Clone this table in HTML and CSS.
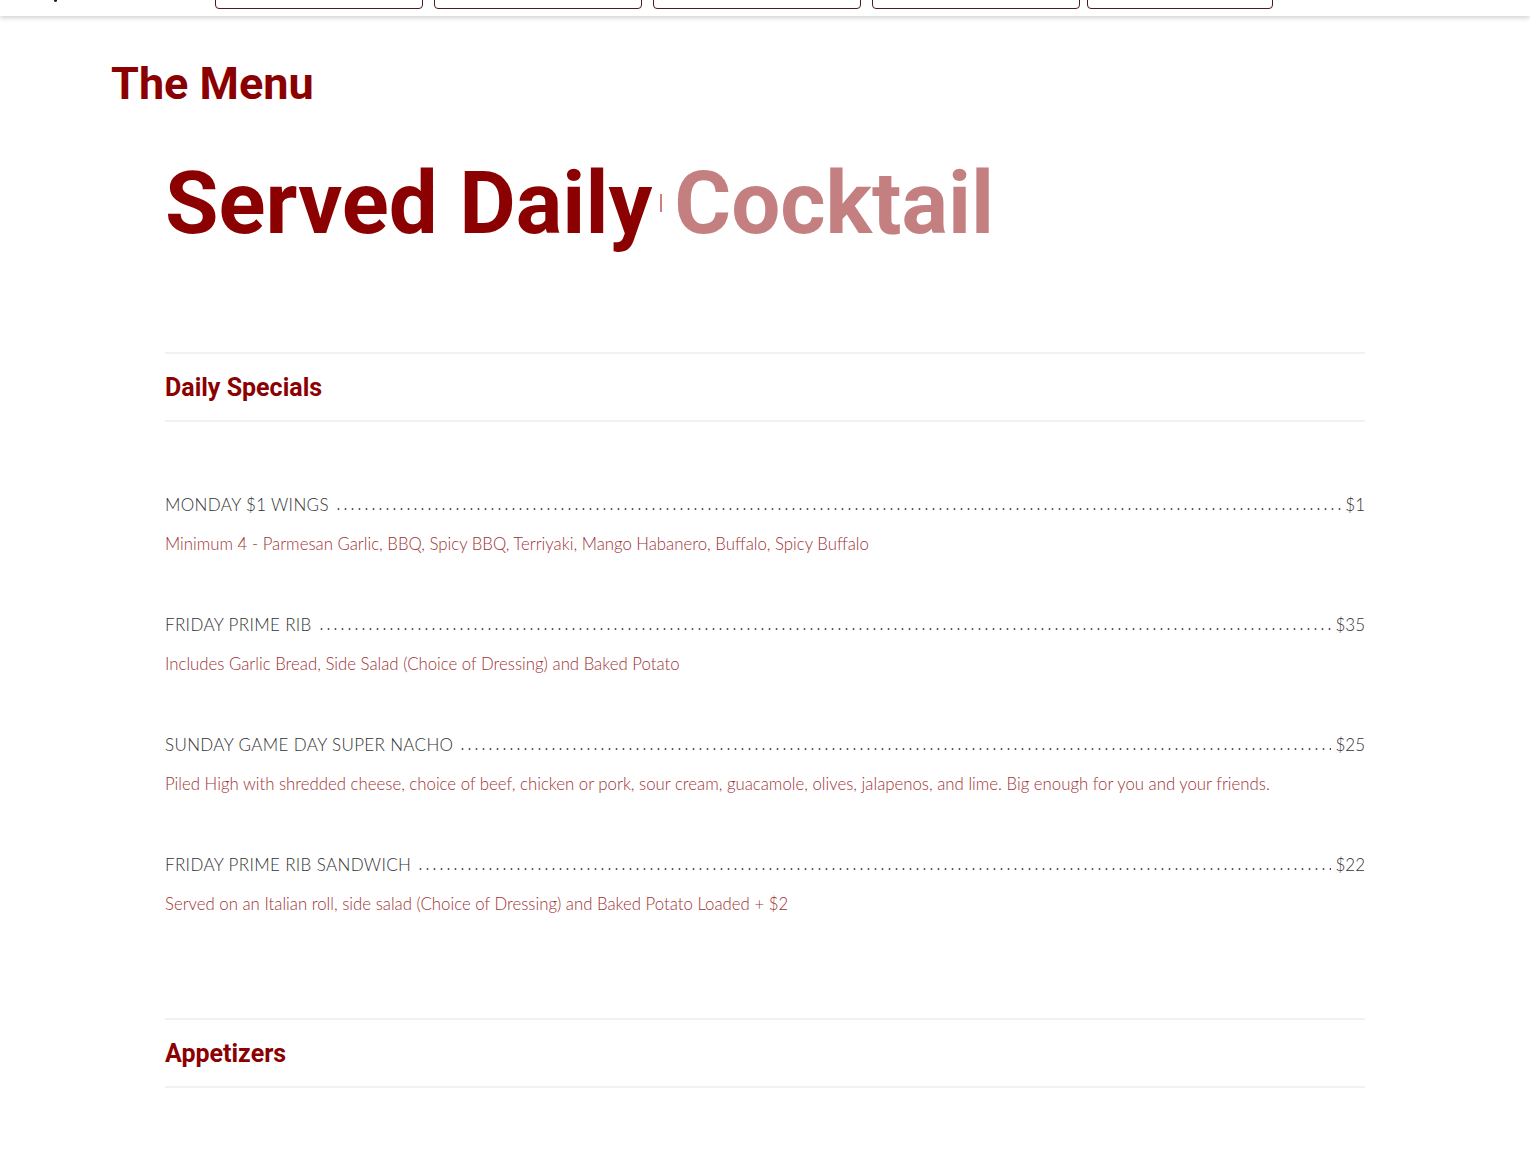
FILE: index.html
```html
<!DOCTYPE html>
<html lang="en">
<head>
    <meta charset="UTF-8">
    <meta name="viewport" content="width=device-width, initial-scale=1.0">
    <title>The Menu</title>
    <link rel="stylesheet" href="styles.css">
</head>
<body>
    <header class="topbar">
        <span class="logo-tip"></span>
        <nav class="nav">
            <a class="nav-btn" href="#" aria-label="Home"></a>
            <a class="nav-btn" href="#" aria-label="Menu"></a>
            <a class="nav-btn" href="#" aria-label="Events"></a>
            <a class="nav-btn" href="#" aria-label="Gallery"></a>
            <a class="nav-btn nav-btn-last" href="#" aria-label="Contact"></a>
        </nav>
    </header>

    <main class="page">
        <h1 class="page-title">The Menu</h1>

        <div class="content">
            <h2 class="hero">Served Daily<span class="caret"></span><span class="hero-faded">Cocktail</span></h2>

            <section class="menu-section">
                <h3 class="section-title">Daily Specials</h3>

                <div class="items">
                    <div class="item">
                        <div class="item-line">
                            <span class="item-name">MONDAY $1 WINGS</span>
                            <span class="leader"></span>
                            <span class="item-price">$1</span>
                        </div>
                        <p class="item-desc">Minimum 4 - Parmesan Garlic, BBQ, Spicy BBQ, Terriyaki, Mango Habanero, Buffalo, Spicy Buffalo</p>
                    </div>

                    <div class="item">
                        <div class="item-line">
                            <span class="item-name">FRIDAY PRIME RIB</span>
                            <span class="leader"></span>
                            <span class="item-price">$35</span>
                        </div>
                        <p class="item-desc">Includes Garlic Bread, Side Salad (Choice of Dressing) and Baked Potato</p>
                    </div>

                    <div class="item">
                        <div class="item-line">
                            <span class="item-name">SUNDAY GAME DAY SUPER NACHO</span>
                            <span class="leader"></span>
                            <span class="item-price">$25</span>
                        </div>
                        <p class="item-desc">Piled High with shredded cheese, choice of beef, chicken or pork, sour cream, guacamole, olives, jalapenos, and lime. Big enough for you and your friends.</p>
                    </div>

                    <div class="item">
                        <div class="item-line">
                            <span class="item-name">FRIDAY PRIME RIB SANDWICH</span>
                            <span class="leader"></span>
                            <span class="item-price">$22</span>
                        </div>
                        <p class="item-desc">Served on an Italian roll, side salad (Choice of Dressing) and Baked Potato Loaded + $2</p>
                    </div>
                </div>
            </section>

            <section class="menu-section">
                <h3 class="section-title">Appetizers</h3>
            </section>
        </div>
    </main>
</body>
</html>
```

FILE: styles.css
```css
body {
    margin: 0;
    font-family: Lato, "Open Sans", sans-serif;
    background: #fff;
    color: #333;
}
.topbar {
    height: 16px;
    overflow: hidden;
    background: #fff;
    box-shadow: 0 2px 5px rgba(0, 0, 0, 0.18);
    display: flex;
    position: relative;
}
.logo-tip {
    position: absolute;
    left: 54px;
    top: 0;
    width: 3px;
    height: 2px;
    background: #222;
    border-radius: 0 0 2px 2px;
}
.nav {
    display: flex;
    margin-left: 215px;
    margin-top: -31px;
    gap: 11px;
}
.nav-btn {
    display: block;
    width: 206px;
    height: 38px;
    border: 1px solid #4a1c1c;
    border-radius: 4px;
}
.nav-btn-last {
    width: 184px;
    margin-left: -4px;
}
.page {
    padding: 0 111px;
}
.page-title {
    margin: 0;
    padding-top: 43px;
    font-family: Roboto, sans-serif;
    font-weight: 700;
    font-size: 45px;
    line-height: 50px;
    color: #8b0000;
}
.content {
    margin: 0 54px;
}
.hero {
    margin: 39px 0 0;
    font-family: Roboto, sans-serif;
    font-weight: 700;
    font-size: 87px;
    line-height: 110px;
    color: #8b0000;
    display: flex;
    align-items: center;
}
.caret {
    display: inline-block;
    width: 2px;
    height: 18px;
    background: #c88080;
    margin: 0 12px 0 8px;
}
.hero-faded {
    color: #c48080;
}
.hero + .menu-section {
    margin-top: 94px;
}
.section-title {
    margin: 0;
    border-top: 2px solid #f2f2f2;
    border-bottom: 2px solid #f2f2f2;
    height: 66px;
    display: flex;
    align-items: center;
    font-family: Roboto, sans-serif;
    font-weight: 700;
    font-size: 25px;
    color: #8b0000;
}
.items {
    padding-top: 70px;
    padding-bottom: 101px;
    display: flex;
    flex-direction: column;
    gap: 55px;
}
.item-line {
    display: flex;
    align-items: baseline;
    font-size: 17px;
    font-weight: 300;
    line-height: 26px;
    color: #333;
}
.item-name {
    letter-spacing: 0.35px;
}
.leader {
    flex: 1;
    height: 6px;
    margin: 0 4px 0 6px;
    background-image: radial-gradient(circle, #555 0.9px, transparent 1.2px);
    background-size: 7px 4px;
    background-repeat: repeat-x;
    background-position: left bottom;
}
.item-desc {
    margin: 13px 0 0;
    font-size: 16.8px;
    font-weight: 300;
    line-height: 26px;
    color: #9e3336;
}
```
